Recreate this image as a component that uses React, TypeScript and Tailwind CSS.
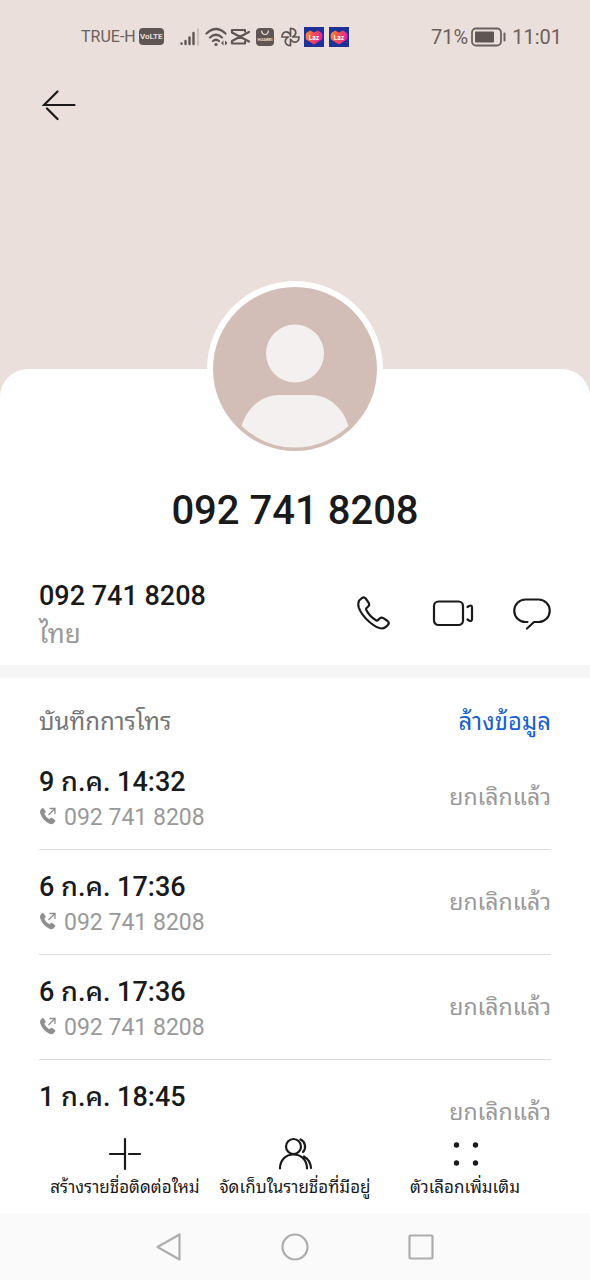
import React from 'react';

interface CallEntry {
  id: number;
  date: string;
  number?: string;
  status: string;
}

const PHONE = '092 741 8208';

const calls: CallEntry[] = [
  { id: 1, date: '9 ก.ค. 14:32', number: PHONE, status: 'ยกเลิกแล้ว' },
  { id: 2, date: '6 ก.ค. 17:36', number: PHONE, status: 'ยกเลิกแล้ว' },
  { id: 3, date: '6 ก.ค. 17:36', number: PHONE, status: 'ยกเลิกแล้ว' },
  { id: 4, date: '1 ก.ค. 18:45', status: 'ยกเลิกแล้ว' },
];

const LazadaIcon = ({ id }: { id: string }) => (
  <svg width="20" height="20" viewBox="0 0 20 20" aria-hidden="true">
    <defs>
      <linearGradient id={id} x1="0" y1="0" x2="1" y2="0.3">
        <stop offset="0" stopColor="#f9952b" />
        <stop offset="0.5" stopColor="#f0504d" />
        <stop offset="1" stopColor="#e024a8" />
      </linearGradient>
    </defs>
    <rect width="20" height="20" fill="#1f3096" />
    <path
      d="M3 5.4 6.2 3.6 10 5.6l3.8-2L17 5.4q1.3.8 1.3 2.3v3.2q0 1.4-1.2 2.2L10 17.6l-7.1-4.5q-1.2-.8-1.2-2.2V7.7Q1.7 6.2 3 5.4Z"
      fill={`url(#${id})`}
    />
    <text x="10" y="12.5" textAnchor="middle" fontSize="6" fontWeight="700" fill="#fff" fontFamily="Inter, sans-serif">
      Laz
    </text>
  </svg>
);

const StatusBar = () => (
  <div className="flex h-[73px] items-center justify-between pl-[81px] pr-7 text-[#6a605d]">
    <div className="flex items-center">
      <span className="text-base leading-5">TRUE-H</span>
      <span className="ml-[3px] flex h-[17px] w-[25px] items-center justify-center rounded bg-[#5f5653] font-['Roboto'] text-[8px] font-bold leading-none text-[#eadfda]">
        VoLTE
      </span>
      <svg className="ml-4" width="20" height="20" viewBox="0 0 20 20" fill="none" strokeWidth="2.4" strokeLinecap="round" aria-hidden="true">
        <g stroke="#5f5653">
          <path d="M1.500 16.500v.3M5.500 14v3M9.500 10.500v6.500M13.500 6v11" />
        </g>
        <path d="M18 2v16" stroke="#c2b6b1" strokeWidth="1.5" />
      </svg>
      <svg className="ml-[5px]" width="24" height="22" viewBox="0 0 24 22" fill="none" stroke="#5f5653" strokeWidth="2.2" strokeLinecap="round" aria-hidden="true">
        <path d="M1.500 7.500Q11-1.500 20.500 7.500M5 11.500q6-5.500 12 0M8 15q3-2.500 6 0" />
        <circle cx="11" cy="18.5" r="1.6" fill="#5f5653" stroke="none" />
        <path d="m18.500 14.500-2.500 2.500 2.500 2.500zM20 14.500l2.500 2.500-2.500 2.500z" fill="#5f5653" stroke="none" />
      </svg>
      {/* CapCut */}
      <svg width="22" height="20" viewBox="0 0 22 20" fill="none" stroke="#5f5653" strokeWidth="2.2" strokeLinejoin="round" strokeLinecap="round" aria-hidden="true">
        <path d="M16 4.500V3H3v2.500L20 14.500M16 14.500v2H3V14L20 5" />
      </svg>
      <svg className="ml-[5px]" width="18" height="18" viewBox="0 0 18 18" aria-hidden="true">
        <rect width="18" height="18" rx="4" fill="#5f5653" />
        <path d="M5.500 2.500q.5 4 3.500 4t3.500-4" fill="none" stroke="#eadfda" strokeWidth="1.2" />
        <text x="9" y="13" textAnchor="middle" fontSize="4" fontWeight="700" fill="#eadfda" fontFamily="Roboto, sans-serif">
          HUAWEI
        </text>
      </svg>
      <svg className="ml-[7px]" width="19" height="20" viewBox="0 0 20 20" fill="none" stroke="#5f5653" strokeWidth="1.8" strokeLinejoin="round" aria-hidden="true">
        <path d="M10 10V1q5.500.3 5.500 4.600 0 2.600-3.200 4.400H19q-.3 5.500-4.600 5.500-2.600 0-4.400-3.200V19q-5.500-.3-5.500-4.600 0-2.600 3.200-4.400H1q.3-5.500 4.600-5.500 2.600 0 4.400 3.200" />
      </svg>
      <span className="ml-1 flex gap-[5px]">
        <LazadaIcon id="laz-a" />
        <LazadaIcon id="laz-b" />
      </span>
    </div>
    <div className="flex items-center text-xl leading-6">
      <span>71%</span>
      <svg className="ml-[3px]" width="36" height="20" viewBox="0 0 36 20" aria-hidden="true">
        <rect x="1" y="1.5" width="29" height="17" rx="4" fill="none" stroke="#6a605d" strokeWidth="1.8" />
        <rect x="4" y="4.5" width="19" height="11" rx="1" fill="#5f5653" />
        <path d="M33.500 6.500v7" stroke="#6a605d" strokeWidth="2" strokeLinecap="round" />
      </svg>
      <span className="ml-[5px]">11:01</span>
    </div>
  </div>
);

const Avatar = () => (
  <svg className="mx-auto -mt-[88px] block" width="176" height="176" viewBox="0 0 176 176" role="img" aria-label="092 741 8208">
    <circle cx="88" cy="88" r="88" fill="#fff" />
    <circle cx="88" cy="88" r="82" fill="#d3beb7" />
    <circle cx="88" cy="72.5" r="29" fill="#f5f0f0" />
    <path d="M34.500 145C40 127 54 114 73 114h30c19 0 33 13 38.500 31Q118 166.500 88 166.500T34.500 145Z" fill="#f5f0f0" />
  </svg>
);

const OutgoingIcon = () => (
  <svg className="mb-1" width="18" height="18" viewBox="0 0 18 18" fill="none" aria-hidden="true">
    <path
      d="M1.600 2.700 3.100 1.200q.9-.6 1.600.3L6.500 4.200q.5.900-.3 1.600l-1 .9q1.700 3.700 5.300 5.600l1-1q.8-.8 1.700-.2l2.700 1.900q.9.700.2 1.600l-1.700 1.900q-1.400 1.200-4 .2Q3.800 13.600 1.300 6.500.6 4 1.600 2.700Z"
      fill="#8f8f8f"
    />
    <path d="M9.500 8 15.500 2M10.500 1.500H16V7" stroke="#8f8f8f" strokeWidth="1.3" />
  </svg>
);

const App: React.FC = () => {
  const renderCall = (call: CallEntry) => (
    <li
      key={call.id}
      className="flex items-start justify-between border-b border-[#dcdcdc] pb-[13px] pt-[19px] last:border-0 last:pb-0"
    >
      <div>
        <p className="text-[27px] font-medium leading-9 text-[#1a1a1a]">{call.date}</p>
        {call.number && (
          <p className="flex items-center gap-[7px] text-[23px] leading-9 text-[#999]">
            <OutgoingIcon />
            {call.number}
          </p>
        )}
      </div>
      <span className="pt-4 text-[23px] leading-9 text-[#999]">{call.status}</span>
    </li>
  );

  return (
    <div className="flex min-h-screen flex-col bg-white font-['Roboto','Noto_Sans_Thai_Looped','Noto_Looped_Thai','Loma','Waree','Noto_Sans','DejaVu_Sans',sans-serif]">
      <main className="flex-1 bg-[#eadfda]">
        <header className="h-[369px]">
          <StatusBar />
          <button type="button" aria-label="กลับ" className="ml-[42px] mt-[15px] block">
            <svg width="34" height="34" viewBox="0 0 34 34" fill="none" stroke="#1a1a1a" strokeWidth="2.2" strokeLinecap="round">
              <path d="M15.500 3.500 2 17h30.500M5 20.500l10.500 10.500" />
            </svg>
          </button>
        </header>

        <div className="flow-root rounded-t-[28px] bg-white">
          <Avatar />
          <h1 className="mt-7 text-center text-[40px] font-medium leading-[52px] text-[#1a1a1a]">{PHONE}</h1>

          <section className="flex items-start justify-between px-[39px] pb-[11px] pt-[41px]">
            <div>
              <p className="text-[27px] font-medium leading-9 text-[#1a1a1a]">{PHONE}</p>
              <p className="text-[26px] leading-10 text-[#999]">ไทย</p>
            </div>
            {/* Call / video / message */}
            <div className="flex gap-[41px] pt-4 text-[#1a1a1a]">
              <button type="button" aria-label="โทร">
                <svg width="38" height="38" viewBox="0 0 38 38" fill="none" stroke="currentColor" strokeWidth="2.2" strokeLinejoin="round">
                  <path d="M4.200 6.500 7 4q2-1.500 3.700.5l3 4.300q1.200 2.200-.5 3.700l-1.700 1.500q-.8.900-.2 2 3.400 6.600 9.700 10.200 1.200.7 2-.1l1.800-1.800q1.600-1.400 3.600-.2l4.200 2.900q2 1.700.6 3.600-2.600 3.600-6.200 3.900-4.500.2-12.500-6.500Q6 20.500 3.800 13.500 2.600 9 4.200 6.500Z" />
                </svg>
              </button>
              <button type="button" aria-label="วิดีโอคอล">
                <svg className="overflow-visible" width="38" height="38" viewBox="0 0 38 38" fill="none" stroke="currentColor" strokeWidth="2.2" strokeLinecap="round" strokeLinejoin="round">
                  <rect x="0" y="7.5" width="29" height="23.5" rx="4.5" />
                  <path d="M33.500 13 35 12q3-1.500 3 1.500v11.500q0 3-3 1.500L33.500 25.500" />
                </svg>
              </button>
              <button type="button" aria-label="ข้อความ">
                <svg width="38" height="38" viewBox="0 0 38 38" fill="none" stroke="currentColor" strokeWidth="2.2" strokeLinecap="round" strokeLinejoin="round">
                  <path d="M14.500 28H12.500A11.200 11.200 0 0 1 12.500 5.500H25.500a11.200 11.200 0 0 1 0 22.500H21L14 34.500" />
                </svg>
              </button>
            </div>
          </section>

          <div className="h-[13px] bg-[#f6f6f6]" />

          <section className="px-[39px]">
            <div className="flex h-[67px] items-center justify-between pt-5 text-[24px] leading-9">
              <h2 className="text-[#757575]">บันทึกการโทร</h2>
              <button type="button" className="text-[#1a5fd0]">ล้างข้อมูล</button>
            </div>
            <ul>{calls.map(renderCall)}</ul>
          </section>
        </div>
      </main>

      {/* Bottom toolbar */}
      <div className="grid h-[82px] shrink-0 grid-cols-3 bg-white px-10 pt-[5px] text-[#1a1a1a]">
        <button type="button" className="flex flex-col items-center">
          <svg width="36" height="36" viewBox="0 0 36 36" fill="none" stroke="currentColor" strokeWidth="2.2" strokeLinecap="round">
            <path d="M18 3v30M3 18h14M22 18h11" />
          </svg>
          <span className="whitespace-nowrap text-[17px] leading-[30px]">สร้างรายชื่อติดต่อใหม่</span>
        </button>
        <button type="button" className="flex flex-col items-center">
          <svg width="36" height="36" viewBox="0 0 36 36" fill="none" stroke="currentColor" strokeWidth="2.2" strokeLinecap="round">
            <circle cx="16.5" cy="10.5" r="7.5" />
            <path d="M3 32.500C3 24 9 18.500 16.500 18.500S30 24 30 32.500M23.500 3.500c5 2 6 9 2.500 12.500M27 20.500q6.500 4 7 11.500" />
          </svg>
          <span className="whitespace-nowrap text-[17px] leading-[30px]">จัดเก็บในรายชื่อที่มีอยู่</span>
        </button>
        <button type="button" className="flex flex-col items-center">
          <svg width="36" height="36" viewBox="0 0 36 36" fill="currentColor">
            <circle cx="9.5" cy="9" r="2.7" />
            <circle cx="28.5" cy="9" r="2.7" />
            <circle cx="9.5" cy="27" r="2.7" />
            <circle cx="28.5" cy="27" r="2.7" />
          </svg>
          <span className="whitespace-nowrap text-[17px] leading-[30px]">ตัวเลือกเพิ่มเติม</span>
        </button>
      </div>

      {/* System navigation */}
      <nav className="flex h-[67px] shrink-0 items-center justify-center gap-[98px] bg-[#fafafa]">
        <button type="button" aria-label="ย้อนกลับ">
          <svg width="28" height="28" viewBox="0 0 28 28" fill="none" stroke="#adadad" strokeWidth="2.2" strokeLinejoin="round">
            <path d="M24.500 1.500v25L2.500 14Z" />
          </svg>
        </button>
        <button type="button" aria-label="หน้าหลัก">
          <svg width="28" height="28" viewBox="0 0 28 28" fill="none" stroke="#adadad" strokeWidth="2.2">
            <circle cx="14" cy="14" r="12.5" />
          </svg>
        </button>
        <button type="button" aria-label="แอปล่าสุด">
          <svg width="28" height="28" viewBox="0 0 28 28" fill="none" stroke="#adadad" strokeWidth="2.2" strokeLinejoin="round">
            <rect x="2.5" y="2.5" width="23" height="23" rx="1" />
          </svg>
        </button>
      </nav>
    </div>
  );
};

export default App;
